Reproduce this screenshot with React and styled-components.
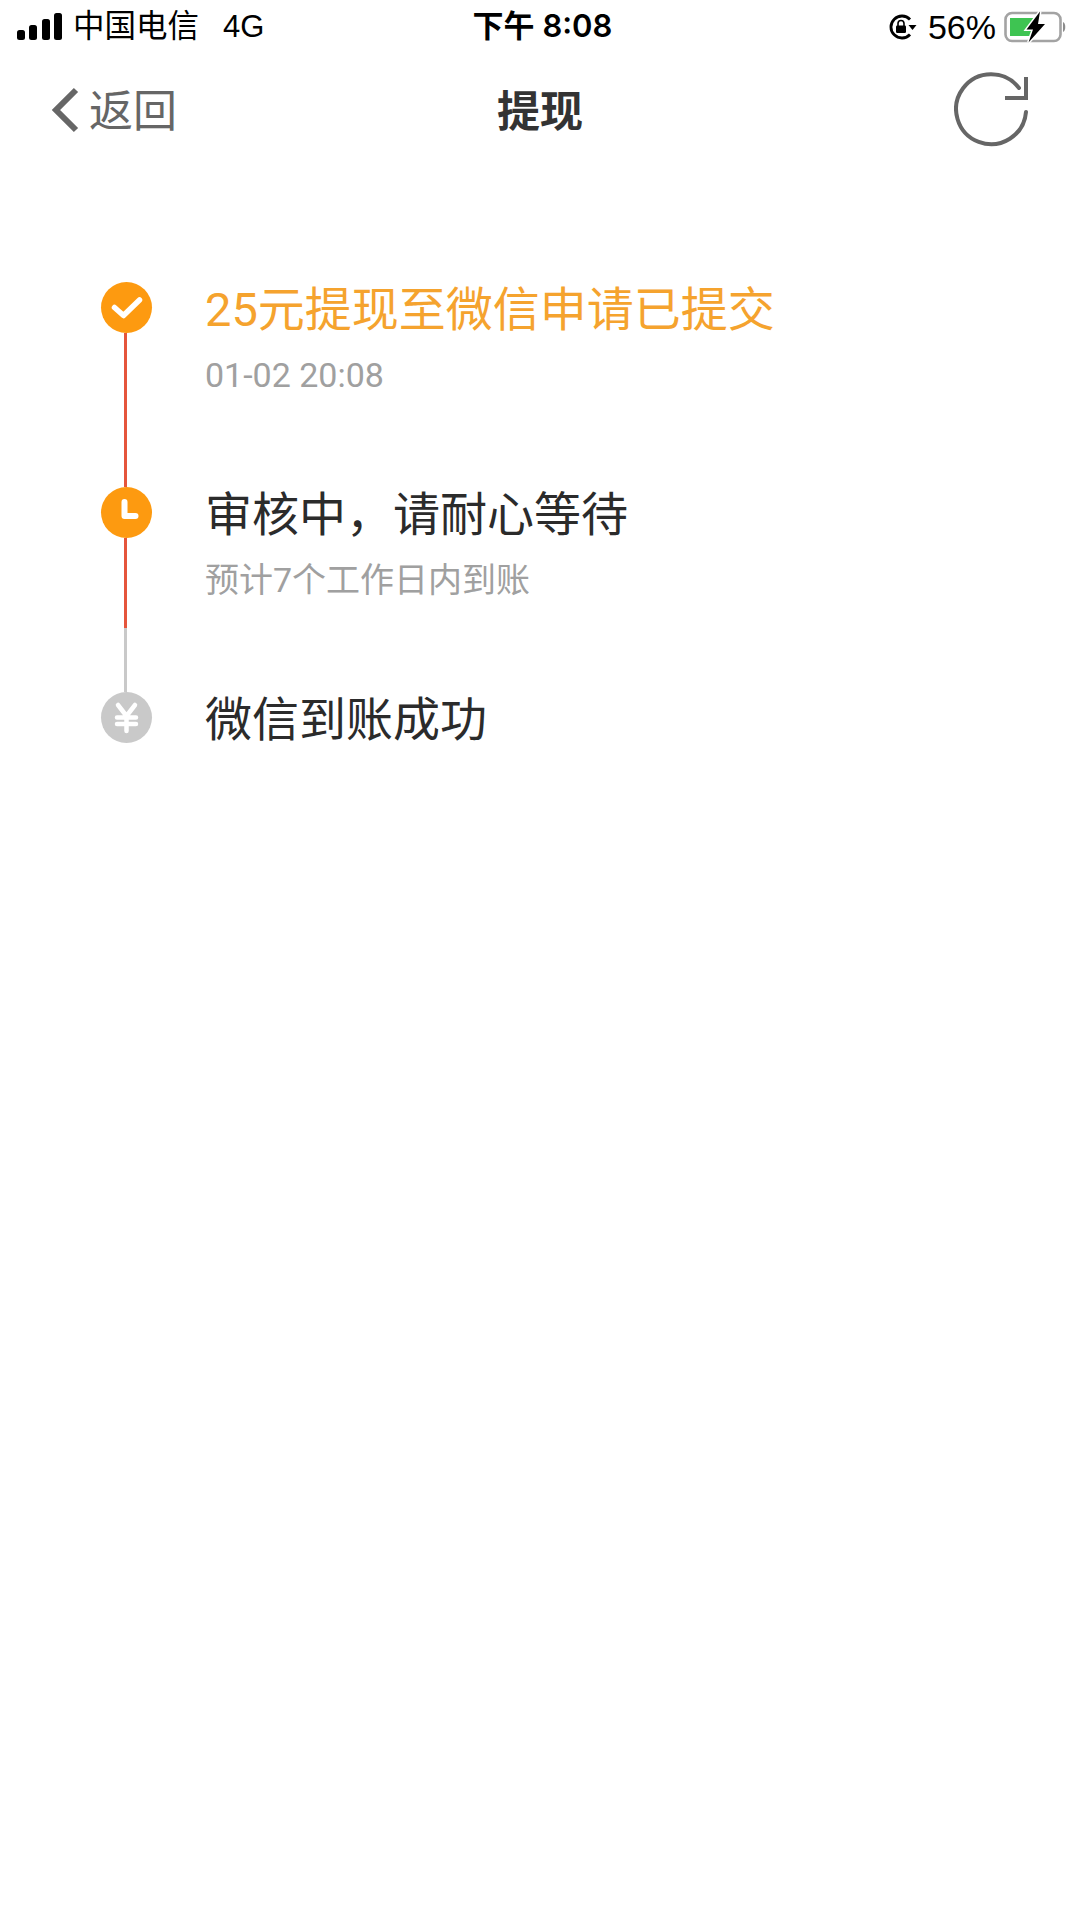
import React from "react";
import styled, { createGlobalStyle } from "styled-components";

const GlobalStyle = createGlobalStyle`
  html, body {
    margin: 0;
    padding: 0;
    background: #ffffff;
  }
  body {
    font-family: "Liberation Sans", "Noto Sans CJK SC", sans-serif;
  }
`;

const steps = [
  { title: "25元提现至微信申请已提交", sub: "01-02 20:08", kind: "done", line: "red" },
  { title: "审核中，请耐心等待", sub: "预计7个工作日内到账", kind: "wait", line: "split" },
  { title: "微信到账成功", kind: "money" },
];

function CheckIcon() {
  return (
    <svg width="51" height="51" viewBox="0 0 51 51">
      <path d="M13.5 25.5 L22.5 33.5 L38.5 18" fill="none" stroke="#fff" strokeWidth="5.5" strokeLinecap="round" strokeLinejoin="round" />
    </svg>
  );
}

function ClockIcon() {
  return (
    <svg width="51" height="51" viewBox="0 0 51 51">
      <path d="M23.5 15 V29 H34.5" fill="none" stroke="#fff" strokeWidth="6" strokeLinecap="round" strokeLinejoin="round" />
    </svg>
  );
}

function YenIcon() {
  return (
    <svg width="51" height="51" viewBox="0 0 51 51">
      <path d="M17 13 L25.5 24 L34 13 M25.5 24 V39 M16 25.5 H35 M16 32 H35" fill="none" stroke="#fff" strokeWidth="4.5" strokeLinecap="round" strokeLinejoin="round" />
    </svg>
  );
}

const icons = { done: <CheckIcon />, wait: <ClockIcon />, money: <YenIcon /> };

export default function App() {
  return (
    <Page>
      <GlobalStyle />
      <StatusBar>
        <StatusLeft>
          <SignalBars width="46" height="28" viewBox="0 0 46 28">
            <rect x="0" y="17" width="8" height="10" rx="2.5" fill="#000" />
            <rect x="12" y="12" width="8" height="15" rx="2.5" fill="#000" />
            <rect x="25" y="6" width="8" height="21" rx="2.5" fill="#000" />
            <rect x="37" y="0" width="8" height="27" rx="2.5" fill="#000" />
          </SignalBars>
          <Carrier>中国电信</Carrier>
          <Network>4G</Network>
        </StatusLeft>
        <Clock>下午 8:08</Clock>
        <StatusRight>
          <LockIcon width="29" height="28" viewBox="0 0 29 28">
            <path d="M22 6.5 A11 11 0 1 0 22 21.5" fill="none" stroke="#000" strokeWidth="2.8" />
            <path d="M20.5 12 H28.5 L24.5 17 Z" fill="#000" />
            <rect x="8" y="12.5" width="10" height="7.5" rx="1.2" fill="#000" />
            <path d="M10 13 V10.5 A3 3 0 0 1 16 10.5 V13" fill="none" stroke="#000" strokeWidth="1.6" />
          </LockIcon>
          <Percent>56%</Percent>
          <BatteryIcon width="64" height="32" viewBox="0 0 64 32">
            <rect x="1.5" y="2" width="55" height="28" rx="6.5" fill="none" stroke="#a3a3a3" strokeWidth="2.6" />
            <path d="M59 11 C62 12 62 20 59 21 Z" fill="#8c8c8c" />
            <path d="M6 7 H31 V25 H6 Z" fill="#3ec452" />
            <path d="M36 0.5 L22.5 18.5 H29 L24.5 31.5 L41 13 H34 Z" fill="#000" stroke="#fff" strokeWidth="3" paintOrder="stroke" />
          </BatteryIcon>
        </StatusRight>
      </StatusBar>

      <NavBar>
        <BackLink>
          <BackChevron width="28" height="46" viewBox="0 0 28 46">
            <path d="M25 3 L5 23 L25 43" fill="none" stroke="#666" strokeWidth="6" />
          </BackChevron>
          <BackText>返回</BackText>
        </BackLink>
        <NavTitle>提现</NavTitle>
        <RefreshButton>
          <svg width="76" height="78" viewBox="0 0 76 78">
            <path d="M72 42 A35 35 0 1 1 65 18" fill="none" stroke="#666" strokeWidth="4" strokeLinecap="round" />
            <path d="M72 7 V28 H51" fill="none" stroke="#666" strokeWidth="4" />
          </svg>
        </RefreshButton>
      </NavBar>

      <Timeline>
        {steps.map((step) => (
          <Step key={step.title}>
            <Rail>
              <Dot $kind={step.kind}>{icons[step.kind]}</Dot>
              {step.line && <Connector $line={step.line} />}
            </Rail>
            <StepBody>
              <StepTitle $active={step.kind === "done"}>{step.title}</StepTitle>
              {step.sub && <StepSub>{step.sub}</StepSub>}
            </StepBody>
          </Step>
        ))}
      </Timeline>
    </Page>
  );
}

const Page = styled.div`
  width: 1080px;
  height: 1920px;
  background: #ffffff;
  overflow: hidden;
`;

const StatusBar = styled.div`
  height: 50px;
  padding: 0 12px 0 17px;
  display: grid;
  grid-template-columns: 1fr auto 1fr;
  align-items: center;
  color: #000;
`;

const StatusLeft = styled.div`
  display: flex;
  align-items: center;
  gap: 10px;
`;

const SignalBars = styled.svg`
  margin-top: 4px;
`;

const Carrier = styled.span`
  font-size: 31.5px;
  line-height: 40px;
  margin-top: 2px;
`;

const Network = styled.span`
  font-size: 31px;
  line-height: 40px;
  margin-left: 14px;
  margin-top: 3px;
`;

const Clock = styled.span`
  font-size: 31px;
  line-height: 40px;
  font-weight: 600;
  margin-top: 2px;
  font-family: "Inter", "Noto Sans CJK SC", sans-serif;
`;

const StatusRight = styled.div`
  display: flex;
  align-items: center;
  justify-content: flex-end;
  gap: 8px;
`;

const LockIcon = styled.svg`
  margin-top: 4px;
  margin-right: 3px;
`;

const Percent = styled.span`
  font-size: 34px;
  line-height: 40px;
  margin-top: 4px;
`;

const BatteryIcon = styled.svg`
  margin-top: 4px;
`;

const NavBar = styled.div`
  height: 115px;
  padding: 0 50px;
  display: grid;
  grid-template-columns: 1fr auto 1fr;
  align-items: center;
`;

const BackLink = styled.div`
  display: flex;
  align-items: center;
  gap: 10px;
`;

const BackChevron = styled.svg`
  margin-left: 1px;
  margin-top: 5px;
`;

const BackText = styled.span`
  font-size: 44px;
  color: #666;
  font-family: "Noto Sans CJK SC", sans-serif;
`;

const NavTitle = styled.span`
  font-size: 43px;
  font-weight: 700;
  color: #333;
  font-family: "Noto Sans CJK SC", sans-serif;
`;

const RefreshButton = styled.div`
  display: flex;
  justify-content: flex-end;
  margin-top: 3px;
`;

const Timeline = styled.div`
  padding: 117px 0 0 101px;
  display: flex;
  flex-direction: column;
`;

const Step = styled.div`
  display: flex;
  gap: 53px;
`;

const Rail = styled.div`
  width: 51px;
  display: flex;
  flex-direction: column;
  align-items: center;
`;

const dotColors = { done: "#fd9a10", wait: "#fd9a10", money: "#c9c9c9" };

const Dot = styled.div`
  width: 51px;
  height: 51px;
  border-radius: 50%;
  flex-shrink: 0;
  display: flex;
  background: ${(p) => dotColors[p.$kind]};
`;

const Connector = styled.div`
  width: 3px;
  height: 154px;
  margin-right: 3px;
  background: ${(p) =>
    p.$line === "split"
      ? "linear-gradient(to bottom, #e5553c 0, #e5553c 90px, #c9c9c9 90px, #c9c9c9 100%)"
      : "#e5553c"};
`;

const StepBody = styled.div`
  display: flex;
  flex-direction: column;
`;

const StepTitle = styled.div`
  font-size: 47px;
  line-height: 56px;
  color: ${(p) => (p.$active ? "#f5a32e" : "#2b2b2b")};
  font-family: "Roboto", "Noto Sans CJK SC", sans-serif;
  white-space: nowrap;
`;

const StepSub = styled.div`
  margin-top: 15px;
  font-size: 34px;
  line-height: 44px;
  color: #a0a0a0;
  font-family: "Roboto", "Noto Sans CJK SC", sans-serif;
  white-space: nowrap;
`;
